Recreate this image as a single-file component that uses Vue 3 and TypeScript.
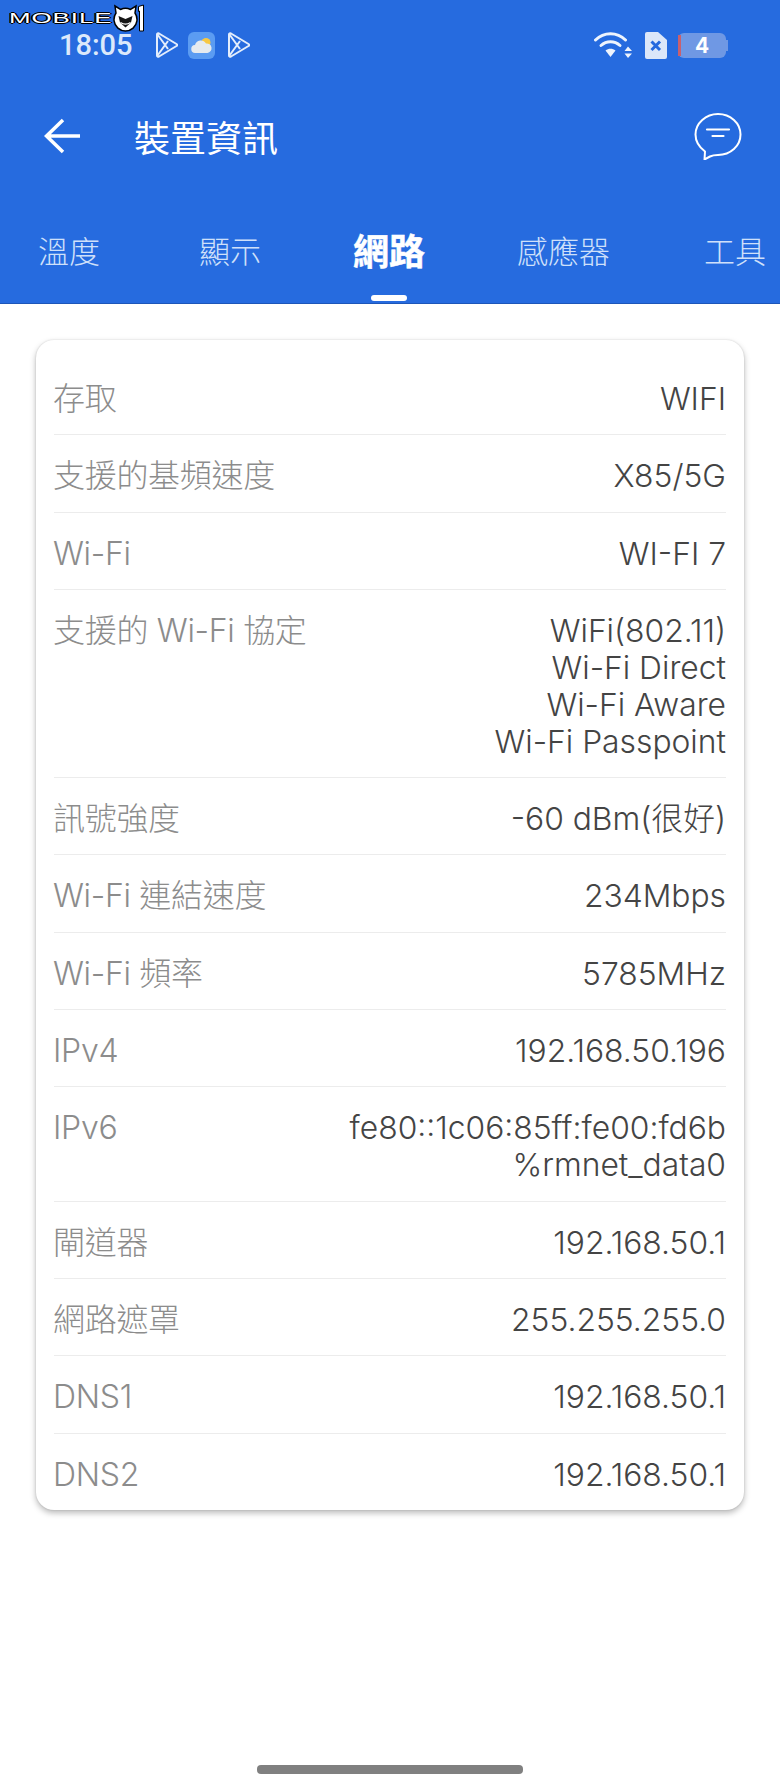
<script setup lang="ts">
interface InfoRow {
  label: string
  values: string[]
}

const tabs = ['溫度', '顯示', '網路', '感應器', '工具']
const activeTab = '網路'

const rows: InfoRow[] = [
  { label: '存取', values: ['WIFI'] },
  { label: '支援的基頻速度', values: ['X85/5G'] },
  { label: 'Wi-Fi', values: ['WI-FI 7'] },
  { label: '支援的 Wi-Fi 協定', values: ['WiFi(802.11)', 'Wi-Fi Direct', 'Wi-Fi Aware', 'Wi-Fi Passpoint'] },
  { label: '訊號強度', values: ['-60 dBm(很好)'] },
  { label: 'Wi-Fi 連結速度', values: ['234Mbps'] },
  { label: 'Wi-Fi 頻率', values: ['5785MHz'] },
  { label: 'IPv4', values: ['192.168.50.196'] },
  { label: 'IPv6', values: ['fe80::1c06:85ff:fe00:fd6b', '%rmnet_data0'] },
  { label: '閘道器', values: ['192.168.50.1'] },
  { label: '網路遮罩', values: ['255.255.255.0'] },
  { label: 'DNS1', values: ['192.168.50.1'] },
  { label: 'DNS2', values: ['192.168.50.1'] },
]
</script>

<template>
  <div class="screen">
    <header class="appbar">
      <div class="status">
        <div class="watermark">
          <span class="wm-text">MOBILE</span>
          <svg class="wm-logo" width="34" height="28" viewBox="0 0 34 28">
            <!-- cat head with mask and grin, then the numeral bar -->
            <path d="M2 2l5.500 3.500a12 12 0 0 1 10 0L23 2l-1 7a11.500 11.500 0 1 1-19 0z" fill="#fff" stroke="#000" stroke-width="1.500" />
            <path d="M5.500 12l7 3 7-3-1.500 6.500-5.500 5-5.500-5z" fill="#161616" />
            <path d="M7.500 18.500c3 2 7 2 10 0" fill="none" stroke="#fff" stroke-width="1.200" />
            <path d="M25.500 2.500l5-1.500v26h-4v-20l-1 .5z" fill="#fff" stroke="#000" />
          </svg>
        </div>
        <div class="status-left">
          <span class="clock">18:05</span>
          <svg class="play" viewBox="0 0 23 26" width="23" height="26">
            <path d="M2 2.500c0-1 1-1.500 2-1L21.500 12c1 .6 1 1.400 0 2L4 24.500c-1 .5-2 0-2-1zM2.500 2.500 13 17M2.500 23.500 13 9" fill="none" stroke="#e3edfc" stroke-width="2" stroke-linejoin="round" />
          </svg>
          <svg class="weather" viewBox="0 0 27 27" width="27" height="27">
            <rect width="27" height="27" rx="6" fill="#5b9cf2" />
            <circle cx="18" cy="10.500" r="4.500" fill="#f7c843" />
            <path d="M7.500 21a4 4 0 0 1-.5-8 6 6 0 0 1 11-1.500A4.800 4.800 0 0 1 19.500 21z" fill="#e6ebef" />
          </svg>
          <svg class="play" viewBox="0 0 23 26" width="23" height="26">
            <path d="M2 2.500c0-1 1-1.500 2-1L21.500 12c1 .6 1 1.400 0 2L4 24.500c-1 .5-2 0-2-1zM2.500 2.500 13 17M2.500 23.500 13 9" fill="none" stroke="#e3edfc" stroke-width="2" stroke-linejoin="round" />
          </svg>
        </div>
        <div class="status-right">
          <svg viewBox="0 0 38 26" width="38" height="26">
            <path d="M1.500 8C10-.5 23-.5 31.500 8" fill="none" stroke="#eef4fd" stroke-width="3" stroke-linecap="round" />
            <path d="M7 13.500c5.500-5 13.500-5 19 0" fill="none" stroke="#eef4fd" stroke-width="3" stroke-linecap="round" />
            <path d="M11.500 18.500c3-2.500 7-2.500 10 0L16.500 25z" fill="#eef4fd" />
            <path d="M34 14.500l4 4.500h-7.500zM34 26l4-4.500h-7.500z" fill="#eef4fd" />
          </svg>
          <svg viewBox="0 0 23 27" width="23" height="27">
            <path d="M3 0h11l9 8v17a2 2 0 0 1-2 2H3a2 2 0 0 1-2-2V2a2 2 0 0 1 2-2z" fill="#dce7f9" />
            <path d="M7.500 9.500l8.500 8.500M16 9.500l-8.500 8.500" stroke="#2469de" stroke-width="3" />
          </svg>
          <div class="battery">
            <span class="battery-low"></span>
            <span class="battery-level">4</span>
            <span class="battery-cap"></span>
          </div>
        </div>
      </div>

      <div class="titlebar">
        <svg class="back" viewBox="0 0 36 36" width="36" height="36">
          <path d="M36 18H3M19 2 2.500 18 19 34" fill="none" stroke="#fff" stroke-width="3.500" />
        </svg>
        <h1 class="title">裝置資訊</h1>
        <svg class="chat" viewBox="0 0 48 48" width="48" height="48">
          <path d="M24 2c12.500 0 22.500 9 22.500 20.500S36.500 43 24 43c-3 0-5 0-8 1.500L10.500 47.500l.5-8C5 35 1.500 29 1.500 22.500 1.500 11 12 2 24 2z" fill="none" stroke="#fff" stroke-width="2" stroke-linejoin="round" />
          <path d="M13 17.500h22M18.500 24h11" stroke="#fff" stroke-width="2.200" stroke-linecap="round" />
        </svg>
      </div>

      <nav class="tabs">
        <div v-for="tab in tabs" :key="tab" class="tab" :class="{ active: tab === activeTab }">{{ tab }}</div>
      </nav>
    </header>

    <main class="content">
      <section class="card">
        <div v-for="row in rows" :key="row.label" class="row">
          <div class="label">{{ row.label }}</div>
          <div class="value">
            <div v-for="line in row.values" :key="line">{{ line }}</div>
          </div>
        </div>
      </section>
    </main>

    <div class="home-bar"></div>
  </div>
</template>

<style>
html,
body {
  margin: 0;
  background: #fff;
}
</style>

<style scoped>
.screen {
  position: relative;
  width: 780px;
  height: 1790px;
  overflow: hidden;
  background: #fff;
  font-family: Inter, "Noto Sans CJK TC", sans-serif;
}

.appbar {
  height: 304px;
  background: #266bdf;
  border-bottom: 1px solid #1d56b8;
  box-sizing: border-box;
}

.status {
  position: relative;
  height: 90px;
  display: flex;
  justify-content: space-between;
  align-items: center;
  padding: 0 54px 0 59px;
  box-sizing: border-box;
}

.watermark {
  position: absolute;
  left: 9px;
  top: 4px;
  display: flex;
  align-items: center;
}

.wm-text {
  width: 104px;
  color: #fff;
  font-family: "Liberation Sans", sans-serif;
  font-size: 14px;
  font-weight: 400;
  line-height: 14px;
  letter-spacing: 0.5px;
  text-shadow: 1px 0 #000, -1px 0 #000, 0 1px #000, 0 -1px #000;
  transform: scaleX(1.85);
  transform-origin: left;
}

.status-left,
.status-right {
  display: flex;
  align-items: center;
}

.clock {
  color: #dce9fb;
  font-family: Roboto, sans-serif;
  font-size: 29px;
  font-weight: 500;
  margin-right: 22px;
}

.status-left .weather {
  margin: 0 12px 0 10px;
}

.status-right {
  gap: 11.500px;
}

.battery {
  position: relative;
  width: 48px;
  height: 25px;
  border-radius: 6px;
  background: #6f98e4;
  display: flex;
  align-items: center;
  justify-content: center;
}

.battery-low {
  position: absolute;
  left: 0;
  top: 2px;
  bottom: 2px;
  width: 3px;
  background: #c8606e;
}

.battery-level {
  color: #fff;
  font-size: 21px;
  font-weight: 700;
}

.battery-cap {
  position: absolute;
  right: -2px;
  top: 7px;
  width: 2px;
  height: 11px;
  background: #6f98e4;
}

.titlebar {
  height: 92px;
  display: flex;
  align-items: center;
  padding: 0 38px 0 44px;
}

.title {
  margin: 0 0 0 54px;
  flex: 1;
  color: #fff;
  font-size: 36px;
  font-weight: 400;
}

.tabs {
  display: flex;
  gap: 92px;
  padding: 48px 0 0 38px;
}

.tab {
  flex: none;
  color: #cfe0fa;
  font-size: 31px;
  font-weight: 300;
  line-height: 44px;
  white-space: nowrap;
}

.tab:nth-child(2) {
  margin-left: 7px;
}

.tab:last-child {
  margin-left: 2px;
}

.tab.active {
  position: relative;
  color: #fff;
  font-size: 36px;
  font-weight: 700;
  -webkit-text-stroke: 0.5px #fff;
}

.tab.active::after {
  content: "";
  position: absolute;
  left: 18px;
  right: 18px;
  bottom: -27px;
  height: 6px;
  border-radius: 3px;
  background: #fff;
}

.content {
  padding: 36px 36px 0;
}

.card {
  padding: 18px 18px 0;
  border-radius: 18px;
  background: #fff;
  box-shadow: 0 3px 6px rgba(0, 0, 0, 0.28), 0 0 2px rgba(0, 0, 0, 0.14);
}

.row {
  display: flex;
  justify-content: space-between;
  padding: 22px 0 17.300px;
  border-bottom: 1px solid #ececec;
  line-height: 37px;
  font-size: 32px;
}

.row:last-child {
  border-bottom: 0;
}

.label {
  color: #8c8c8c;
  font-weight: 300;
  margin-left: -1px;
  letter-spacing: -0.300px;
}

.value {
  color: #444;
  font-size: 31.800px;
  text-align: right;
  font-weight: 300;
}

.home-bar {
  position: absolute;
  left: 257px;
  top: 1765px;
  width: 266px;
  height: 9px;
  border-radius: 4px;
  background: #808080;
}
</style>
